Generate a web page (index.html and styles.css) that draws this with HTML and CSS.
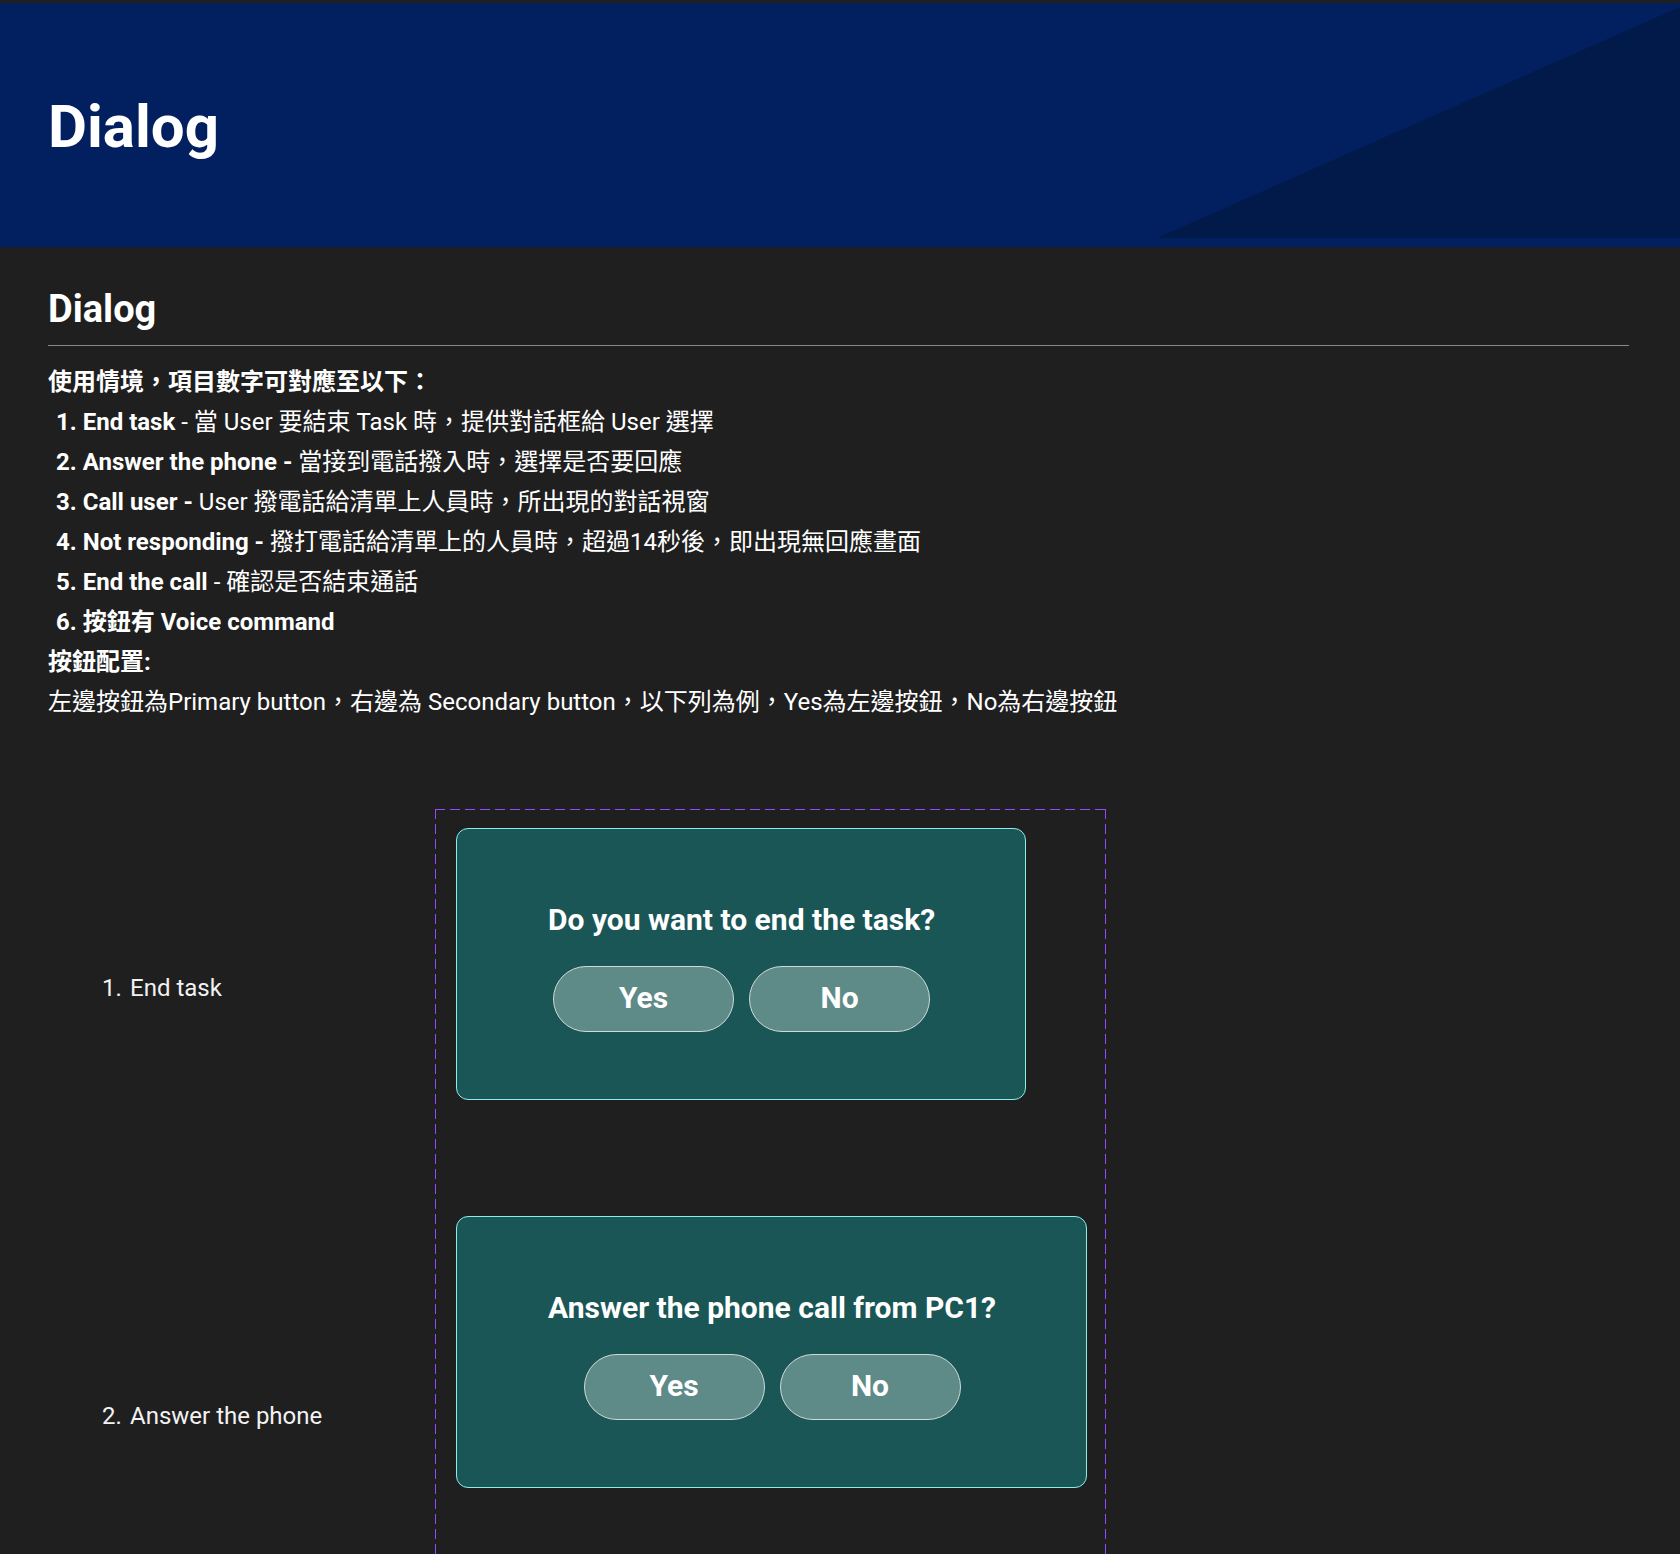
FILE: index.html
```html
<!DOCTYPE html>
<html lang="zh-Hant">
<head>
<meta charset="utf-8">
<title>Dialog</title>
<link rel="stylesheet" href="styles.css">
</head>
<body>
<header class="hero">
  <h1 class="hero-title">Dialog</h1>
</header>
<main class="content">
  <h2 class="section-title">Dialog</h2>
  <hr class="divider">
  <div class="usage">
    <p class="usage-lead" lang="zh-TW">使用情境，項目數字可對應至以下：</p>
    <ol class="usage-list">
      <li>End task<span class="desc"> - 當 User 要結束 Task 時，提供對話框給 User 選擇</span></li>
      <li>Answer the phone - <span class="desc">當接到電話撥入時，選擇是否要回應</span></li>
      <li>Call user - <span class="desc">User 撥電話給清單上人員時，所出現的對話視窗</span></li>
      <li>Not responding - <span class="desc">撥打電話給清單上的人員時，超過14秒後，即出現無回應畫面</span></li>
      <li>End the call<span class="desc"> - 確認是否結束通話</span></li>
      <li>按鈕有 Voice command</li>
    </ol>
    <p class="usage-sub">按鈕配置:</p>
    <p class="usage-text">左邊按鈕為Primary button，右邊為 Secondary button，以下列為例，Yes為左邊按鈕，No為右邊按鈕</p>
  </div>

  <section class="showcase">
    <ol class="labels">
      <li class="label label-1">End task</li>
      <li class="label label-2">Answer the phone</li>
    </ol>
    <div class="frame">
      <div class="dialog">
        <p class="dialog-title">Do you want to end the task?</p>
        <div class="btns">
          <span class="btn">Yes</span>
          <span class="btn">No</span>
        </div>
      </div>
      <div class="dialog">
        <p class="dialog-title">Answer the phone call from PC1?</p>
        <div class="btns">
          <span class="btn">Yes</span>
          <span class="btn">No</span>
        </div>
      </div>
    </div>
  </section>
</main>
</body>
</html>
```

FILE: styles.css
```css
html, body {
  margin: 0;
  padding: 0;
}

body {
  background: #1f1f1f;
  color: #ffffff;
  font-family: Roboto, "Noto Sans CJK JP", sans-serif;
  padding-top: 3px;
}

.hero {
  position: relative;
  height: 244px;
  box-sizing: border-box;
  padding: 88px 48px 0;
  background: #02205f;
  overflow: hidden;
}

.hero::after {
  content: "";
  position: absolute;
  right: 0;
  top: 4px;
  width: 523px;
  height: 231px;
  background: #011a49;
  clip-path: polygon(0 100%, 100% 0, 100% 100%);
}

.hero-title {
  position: relative;
  z-index: 1;
  margin: 0;
  font-size: 60px;
  line-height: 72px;
  font-weight: 700;
}

.content {
  padding: 39px 51px 0 48px;
}

.section-title {
  margin: 0;
  font-size: 38px;
  line-height: 46px;
  font-weight: 700;
}

.divider {
  margin: 13px 0 16px;
  border: 0;
  border-top: 1px solid #8a8a8a;
  height: 0;
}

.usage {
  font-size: 24px;
  line-height: 40px;
}

.usage p {
  margin: 0;
}

.usage-lead {
  font-weight: 700;
  font-family: Roboto, "Noto Sans CJK TC", "Noto Sans CJK JP", sans-serif;
}

.usage-list {
  margin: 0;
  padding-left: 8px;
  list-style-position: inside;
}

.usage-list li {
  font-weight: 700;
}

.usage-list .desc {
  font-weight: 400;
}

.usage-sub {
  font-weight: 700;
}

.showcase {
  display: flex;
  align-items: flex-start;
  margin-top: 87px;
}

.labels {
  flex: none;
  width: 387px;
  box-sizing: border-box;
  margin: 0;
  padding-left: 54px;
  list-style: none;
  counter-reset: lbl;
  font-size: 24px;
  line-height: 40px;
  color: #f2f2f2;
}

.label {
  counter-increment: lbl;
}

.label::before {
  content: counter(lbl) ".";
  display: inline-block;
  width: 28px;
}

.label-1 {
  margin-top: 159px;
}

.label-2 {
  margin-top: 388px;
}

.frame {
  flex: none;
  width: 671px;
  box-sizing: border-box;
  padding: 19px 21px 160px;
  background:
    repeating-linear-gradient(90deg, #9747ff 0 10px, transparent 10px 15px) top left / 100% 1px no-repeat,
    repeating-linear-gradient(90deg, #9747ff 0 10px, transparent 10px 15px) bottom left / 100% 1px no-repeat,
    repeating-linear-gradient(180deg, #9747ff 0 10px, transparent 10px 15px) top left / 1px 100% no-repeat,
    repeating-linear-gradient(180deg, #9747ff 0 10px, transparent 10px 15px) top right / 1px 100% no-repeat;
  display: flex;
  flex-direction: column;
  align-items: flex-start;
  gap: 116px;
}

.dialog {
  box-sizing: border-box;
  border: 1px solid #8ceee9;
  border-radius: 12px;
  background: #1b5657;
  padding: 74px 90px 67px 91px;
  display: flex;
  flex-direction: column;
  align-items: center;
}

.dialog-title {
  margin: 0 0 29px;
  font-size: 30px;
  line-height: 34px;
  font-weight: 700;
  white-space: nowrap;
}

.btns {
  display: flex;
  gap: 15px;
}

.btn {
  width: 181px;
  height: 66px;
  box-sizing: border-box;
  border: 1px solid #cfdada;
  border-radius: 33px;
  background: #5e8a87;
  display: flex;
  align-items: center;
  justify-content: center;
  padding-bottom: 4px;
  font-size: 30px;
  font-weight: 700;
}
```
